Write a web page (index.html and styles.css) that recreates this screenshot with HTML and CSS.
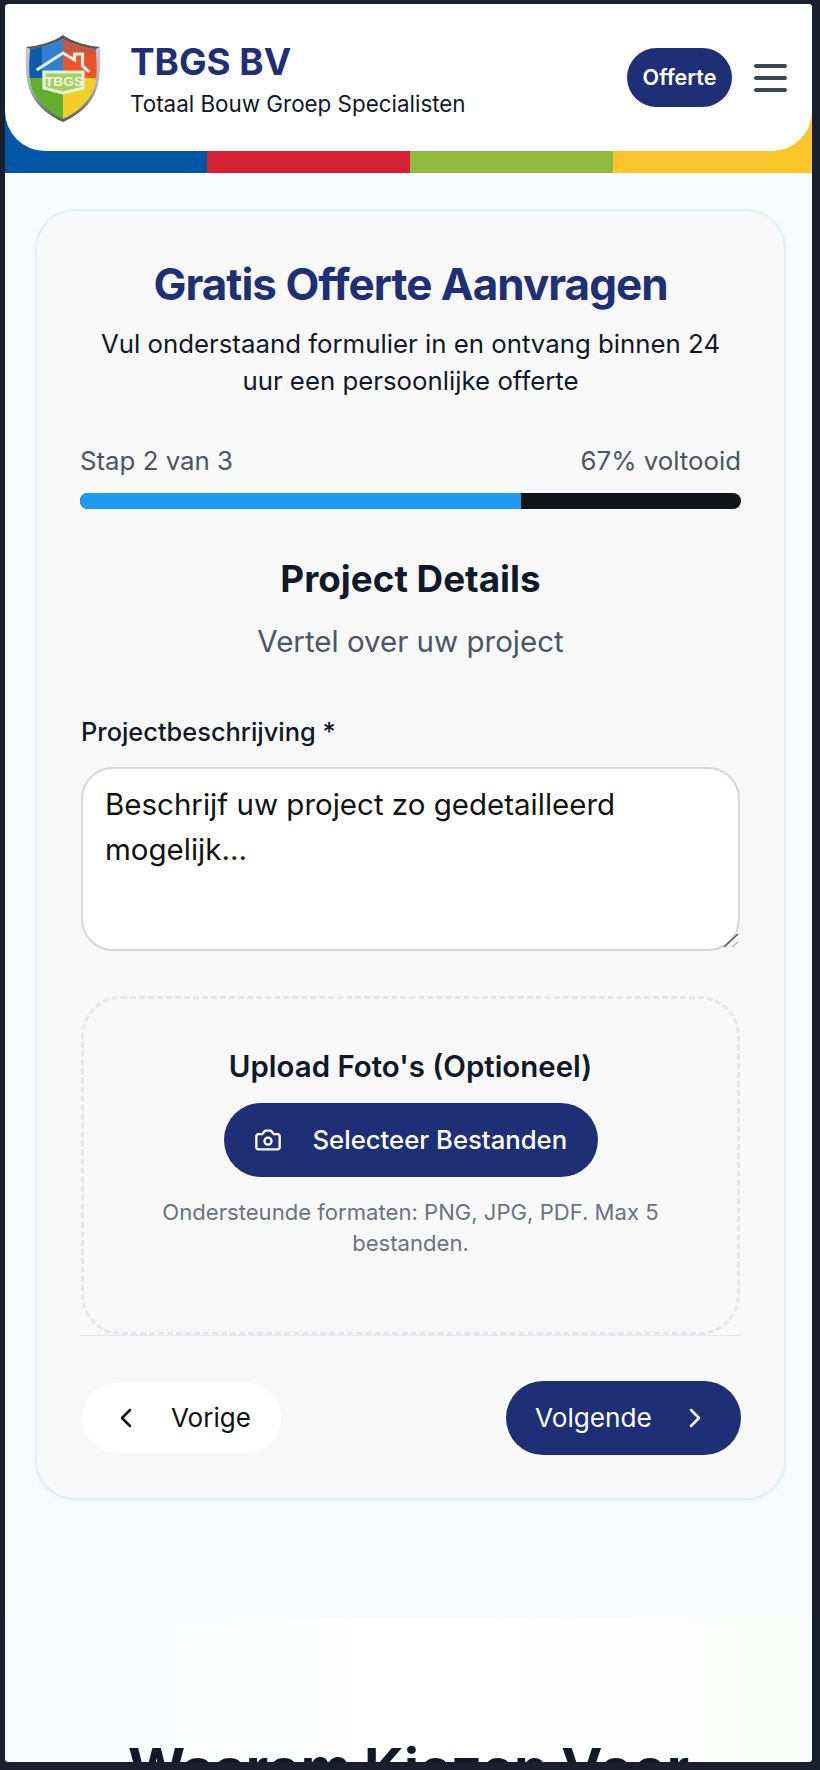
FILE: index.html
```html
<!DOCTYPE html>
<html lang="nl">
<head>
    <meta charset="UTF-8">
    <meta name="viewport" content="width=device-width, initial-scale=1.0">
    <title>Gratis Offerte Aanvragen - TBGS BV</title>
    <link rel="stylesheet" href="styles.css">
</head>
<body>
    <div class="screen">
        <div class="header-band">
            <header class="header">
                <svg class="logo" viewBox="1 0 72 90" preserveAspectRatio="none" aria-label="TBGS logo">
                    <defs>
                        <clipPath id="shieldClip">
                            <path d="M37 5C29 10 16 14 6 15C4 36 5 50 10 60C16 72 27 80 37 85C47 80 58 72 64 60C69 50 70 36 68 15C58 14 45 10 37 5Z"/>
                        </clipPath>
                        <linearGradient id="silver" x1="0" y1="0" x2="0" y2="1">
                            <stop offset="0" stop-color="#d0d4d7"/>
                            <stop offset="0.6" stop-color="#adb1b5"/>
                            <stop offset="1" stop-color="#55585c"/>
                        </linearGradient>
                    </defs>
                    <path d="M37 1C28 8 14 12 2 13C1 35 2 50 8 62C14 74 26 83 37 88C48 83 60 74 66 62C72 50 73 35 72 13C60 12 46 8 37 1Z" fill="url(#silver)"/>
                    <path d="M37 1C28 8 14 12 2 13L6 15C16 14 29 10 37 5C45 10 58 14 68 15L72 13C60 12 46 8 37 1Z" fill="#55585b"/>
                    <g clip-path="url(#shieldClip)">
                        <rect x="0" y="0" width="37" height="44" fill="#2f80d2"/>
                        <rect x="0" y="0" width="17" height="44" fill="#0f5ca8"/>
                        <rect x="37" y="0" width="39" height="44" fill="#ef5128"/>
                        <rect x="37" y="0" width="39" height="20" fill="#c9573f"/>
                        <rect x="0" y="44" width="37" height="46" fill="#5fb02c"/>
                        <rect x="37" y="44" width="39" height="46" fill="#f5cd2a"/>
                    </g>
                    <path d="M12 36L37 19L48 26V20H55.500V32L62 38" fill="none" stroke="#e8ecea" stroke-width="3"/>
                    <path d="M19 38L37 38L56 38V54L37 59L19 54Z" fill="#a6d162" stroke="#e6f0d6" stroke-width="3"/>
                    <text class="logo-text" x="38" y="52" text-anchor="middle">TBGS</text>
                </svg>
                <div class="brand">
                    <div class="brand-name">TBGS BV</div>
                    <div class="brand-sub">Totaal Bouw Groep Specialisten</div>
                </div>
                <a class="offerte-btn" href="#">Offerte</a>
                <div class="hamburger"><span></span><span></span><span></span></div>
            </header>
        </div>

        <main class="main">
            <div class="card">
                <h1>Gratis Offerte Aanvragen</h1>
                <p class="intro">Vul onderstaand formulier in en ontvang binnen 24 uur een persoonlijke offerte</p>

                <div class="progress-labels">
                    <span>Stap 2 van 3</span>
                    <span>67% voltooid</span>
                </div>
                <div class="progress"><div class="progress-fill"></div></div>

                <h2>Project Details</h2>
                <p class="step-sub">Vertel over uw project</p>

                <form>
                    <label for="beschrijving">Projectbeschrijving *</label>
                    <div class="field">
                        <textarea id="beschrijving" placeholder="Beschrijf uw project zo gedetailleerd mogelijk..."></textarea>
                        <svg class="resize-grip" viewBox="0 0 16 16"><path class="grip-long" d="M1 14L15 1"/><path class="grip-short" d="M9 14L15 9"/></svg>
                    </div>

                    <div class="upload">
                        <h3>Upload Foto's (Optioneel)</h3>
                        <button type="button" class="btn btn-primary btn-upload">
                            <svg class="icon-camera" viewBox="0 0 24 24"><path d="M14.5 4h-5L7 7H4a2 2 0 0 0-2 2v9a2 2 0 0 0 2 2h16a2 2 0 0 0 2-2V9a2 2 0 0 0-2-2h-3l-2.500-3z"/><circle cx="12" cy="13" r="3"/></svg>
                            Selecteer Bestanden
                        </button>
                        <p class="upload-note">Ondersteunde formaten: PNG, JPG, PDF. Max 5 bestanden.</p>
                    </div>

                    <div class="form-nav">
                        <button type="button" class="btn btn-back">
                            <svg class="icon-chevron" viewBox="0 0 12 20"><path d="M10 2L2 10l8 8"/></svg>
                            Vorige
                        </button>
                        <button type="button" class="btn btn-primary btn-next">
                            Volgende
                            <svg class="icon-chevron" viewBox="0 0 12 20"><path d="M2 2l8 8-8 8"/></svg>
                        </button>
                    </div>
                </form>
            </div>
        </main>

        <section class="why">
            <h2 class="why-title">Waarom Kiezen Voor TBGS BV?</h2>
        </section>
    </div>
</body>
</html>
```
FILE: styles.css
```css
* {
    box-sizing: border-box;
}
html, body {
    margin: 0;
    height: 100%;
}
body {
    background-color: #1a1f2e;
    font-family: Inter, Arial, sans-serif;
    color: #111827;
    padding: 4px 8px 8px 5px;
}
.screen {
    height: 1758px;
    overflow: hidden;
    background-color: #f9fbfd;
    border-radius: 4px;
}
.header-band {
    height: 169px;
    background: linear-gradient(to right,
        #0057a8 0, #0057a8 202px,
        #d61f31 202px, #d61f31 405px,
        #8fba40 405px, #8fba40 608px,
        #fbc52b 608px, #fbc52b 100%);
}
.header {
    height: 147px;
    background-color: white;
    border-radius: 0 0 40px 40px;
    display: flex;
    align-items: center;
    padding: 0 25px 0 20px;
}
.logo {
    width: 76px;
    height: 90px;
    flex-shrink: 0;
    margin-top: 2px;
}
.logo-text {
    font-family: "Liberation Sans", Arial, sans-serif;
    font-size: 13px;
    font-weight: bold;
    fill: #f0f6dc;
}
.brand {
    margin-left: 29px;
    margin-top: 5px;
    flex: 1;
}
.brand-name {
    font-size: 36.800px;
    font-weight: 700;
    line-height: 44px;
    color: #1e2f75;
}
.brand-sub {
    font-size: 22.400px;
    font-weight: 400;
    line-height: 32px;
    color: #111827;
    margin-top: 4px;
}
.offerte-btn {
    width: 105px;
    height: 59px;
    padding-bottom: 2px;
    border-radius: 30px;
    background-color: #1e2f75;
    color: white;
    font-size: 21.600px;
    font-weight: 600;
    text-decoration: none;
    display: flex;
    align-items: center;
    justify-content: center;
}
.hamburger {
    width: 33px;
    margin-left: 22px;
    display: flex;
    flex-direction: column;
    gap: 8px;
}
.hamburger span {
    height: 4px;
    border-radius: 2px;
    background-color: #3b4657;
}
.main {
    padding: 36px 26px 0 30px;
}
.card {
    height: 1291px;
    background-color: #f8f8f9;
    border: 2px solid #e8edf2;
    border-radius: 40px;
    box-shadow: 0 2px 5px rgba(0, 0, 0, 0.04);
    padding: 46px 43px 0;
}
h1 {
    margin: 0;
    font-size: 44px;
    font-weight: 700;
    line-height: 54px;
    letter-spacing: -1px;
    text-align: center;
    color: #1e2f75;
}
.intro {
    margin: 14px 0 0;
    font-size: 25.800px;
    line-height: 37px;
    text-align: center;
    color: #111827;
}
.progress-labels {
    display: flex;
    justify-content: space-between;
    margin-top: 45px;
    font-size: 25.800px;
    line-height: 34px;
    color: #4b5563;
}
.progress {
    height: 16px;
    margin-top: 15px;
    border-radius: 8px;
    overflow: hidden;
    background-color: #111418;
}
.progress-fill {
    width: 66.670%;
    height: 100%;
    background-color: #1e9bf0;
}
h2 {
    margin: 47px 0 0;
    font-size: 36.800px;
    font-weight: 700;
    line-height: 46px;
    text-align: center;
    color: #111827;
}
.step-sub {
    margin: 19px 0 0;
    font-size: 29.500px;
    line-height: 40px;
    text-align: center;
    color: #4b5563;
}
form {
    margin-top: 54px;
    padding: 0 1px;
}
label {
    display: block;
    font-size: 25.400px;
    font-weight: 500;
    line-height: 34px;
    color: #111827;
}
.field {
    position: relative;
    margin-top: 18px;
}
textarea {
    display: block;
    width: 100%;
    height: 184px;
    padding: 13px 22px;
    border: 2px solid #d6d8db;
    border-radius: 32px;
    background-color: white;
    font-family: inherit;
    font-size: 29.500px;
    line-height: 45px;
    color: #111;
    outline: none;
    resize: none;
}
textarea::placeholder {
    color: #111;
    opacity: 1;
}
.resize-grip {
    position: absolute;
    right: 1px;
    bottom: 2px;
    width: 16px;
    height: 16px;
    fill: none;
}
.grip-long {
    stroke: #555;
    stroke-width: 1.500;
}
.grip-short {
    stroke: #888;
    stroke-width: 1;
}
.upload {
    height: 339px;
    margin-top: 45px;
    padding-top: 49px;
    border: 3px dashed #e5e8ea;
    border-radius: 40px;
    text-align: center;
}
h3 {
    margin: 0;
    font-size: 29.440px;
    font-weight: 600;
    line-height: 36px;
    color: #111827;
}
.btn {
    display: inline-flex;
    align-items: center;
    border: none;
    font-family: inherit;
    font-size: 26px;
    line-height: 34px;
    cursor: pointer;
}
.btn-primary {
    background-color: #1e2f75;
    color: white;
}
.btn-upload {
    width: 374px;
    height: 74px;
    margin-top: 19px;
    padding-left: 30px;
    gap: 31px;
    border-radius: 37px;
    font-size: 25.700px;
    font-weight: 500;
}
.icon-camera {
    width: 28px;
    height: 28px;
    fill: none;
    stroke: white;
    stroke-width: 2;
    stroke-linejoin: round;
}
.upload-note {
    margin: 20px 40px 0;
    font-size: 22.100px;
    line-height: 31px;
    color: #6b7280;
}
.form-nav {
    display: flex;
    justify-content: space-between;
    align-items: center;
    padding-top: 45px;
    margin: 0 -1px;
    border-top: 1px solid #e4e7ec;
}
.icon-chevron {
    width: 12px;
    height: 20px;
    fill: none;
    stroke: currentColor;
    stroke-width: 2.500;
    stroke-linecap: round;
    stroke-linejoin: round;
}
.btn-back {
    width: 199px;
    height: 70px;
    margin-left: 2px;
    padding-left: 38px;
    gap: 39px;
    border-radius: 35px;
    background-color: white;
    color: #111;
}
.btn-next {
    width: 235px;
    height: 74px;
    padding-left: 29px;
    gap: 37px;
    border-radius: 37px;
    font-size: 26.200px;
}
.why {
    margin-top: 118px;
    height: 300px;
    padding-top: 115px;
    background: linear-gradient(to right, #f9fbff, white 50%, #fbfdfb);
}
.why-title {
    margin: 0;
    padding: 0 100px;
    font-size: 55.100px;
    line-height: 70px;
    font-weight: 700;
    text-align: center;
}
```
